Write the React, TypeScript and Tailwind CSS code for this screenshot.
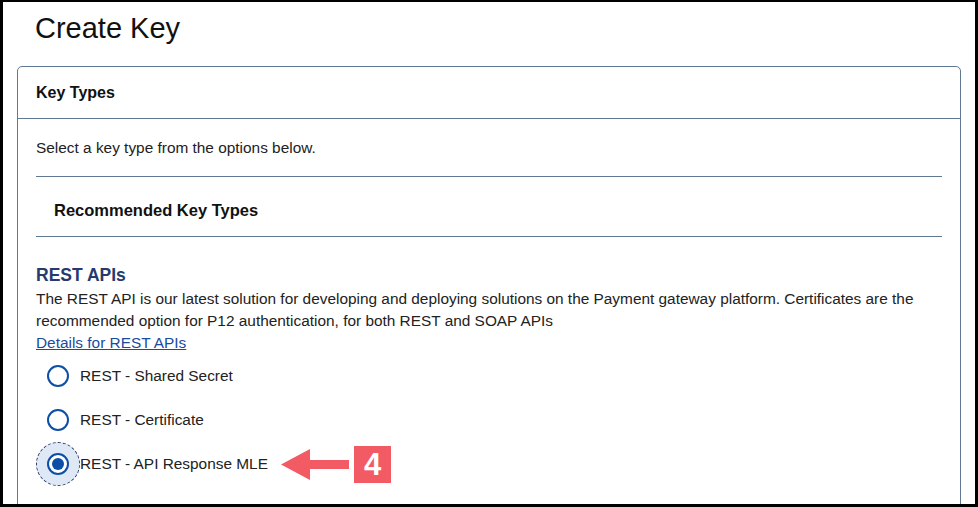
const font = { fontFamily: '"Liberation Sans", Arial, Helvetica, sans-serif' };

function Radio({ checked }: { checked?: boolean }) {
  if (checked) {
    return (
      <span className="flex h-[44px] w-[44px] items-center justify-center rounded-full border border-dashed border-[#2b3a6b] bg-[#dfe9f6]">
        <span className="flex h-[22px] w-[22px] items-center justify-center rounded-full border-2 border-[#0d4ea6] bg-white">
          <span className="h-[12px] w-[12px] rounded-full bg-[#0d4ea6]" />
        </span>
      </span>
    );
  }
  return (
    <span className="flex h-[44px] w-[44px] items-center justify-center">
      <span className="h-[22px] w-[22px] rounded-full border-2 border-[#0d4ea6] bg-white" />
    </span>
  );
}

const options = [
  { label: 'REST - Shared Secret' },
  { label: 'REST - Certificate' },
  { label: 'REST - API Response MLE', checked: true },
];

export default function App() {
  return (
    <div
      className="h-[507px] w-[978px] border-t-[2px] border-r-[3px] border-b-[3px] border-l-[3px] border-black bg-white overflow-hidden"
      style={font}
    >
      <h1 className="pl-[32px] pt-[8px] text-[29px] leading-[36px] text-[#111]">Create Key</h1>

      <div className="mx-[14px] mt-[20px] rounded-t-[5px] border border-[#5f7992]">
        <div className="flex h-[52px] items-center border-b border-[#5f7992] pl-[18px]">
          <h2 className="text-[16px] font-bold text-[#111]">Key Types</h2>
        </div>

        <div className="px-[18px] pb-[60px]">
          <p className="pt-[19px] text-[15.4px] leading-[20px] text-[#222]">
            Select a key type from the options below.
          </p>

          <div className="mt-[18px] border-t border-b border-[#5f7992] pl-[18px] pt-[23px] pb-[16px]">
            <h3 className="text-[16.5px] font-bold leading-[20px] text-[#111]">Recommended Key Types</h3>
          </div>

          <h3 className="mt-[27px] text-[17.5px] font-bold leading-[22px] text-[#263a6e]">REST APIs</h3>
          <p className="mt-[2px] text-[15.4px] leading-[21.5px] text-[#222]">
            The REST API is our latest solution for developing and deploying solutions on the Payment gateway
            platform. Certificates are the recommended option for P12 authentication, for both REST and SOAP APIs
          </p>
          <a href="#" className="text-[15.4px] leading-[21.5px] text-[#1a4b9e] underline">
            Details for REST APIs
          </a>

          <div className="-mt-[1px] flex flex-col">
            {options.map((o) => (
              <div key={o.label} className="relative flex h-[44px] items-center">
                <Radio checked={o.checked} />
                <span className="text-[15.4px] text-[#222]">{o.label}</span>
                {o.checked && (
                  <div className="absolute left-[245px] top-[4px] flex items-center gap-[4px]">
                    <svg width="69" height="31" viewBox="0 0 69 31">
                      <polygon points="0,15.5 29,0 29,11 68,11 68,20 29,20 29,31" fill="#f25a64" />
                    </svg>
                    <span className="flex h-[37px] w-[37px] items-center justify-center bg-[#f25a64] text-[31px] font-bold leading-none text-white">
                      4
                    </span>
                  </div>
                )}
              </div>
            ))}
          </div>
        </div>
      </div>
    </div>
  );
}
